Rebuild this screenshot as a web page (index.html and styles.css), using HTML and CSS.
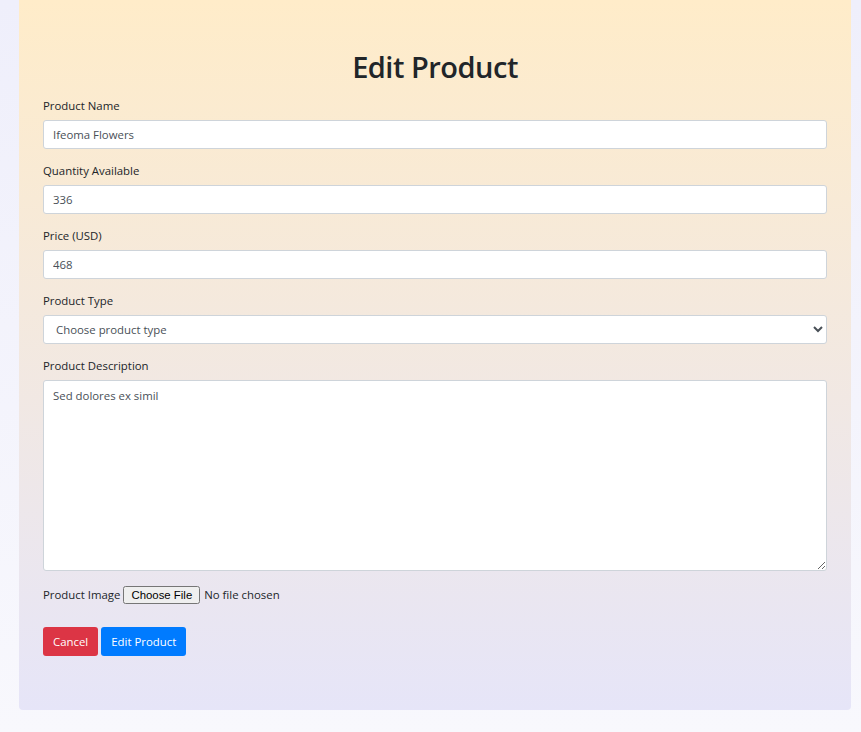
FILE: index.html
```html
<!DOCTYPE html>
<html lang="en">
<head>
<meta charset="utf-8">
<title>Edit Product</title>
<link rel="stylesheet" href="styles.css">
</head>
<body>
<main class="card">
  <h1 class="title">Edit Product</h1>
  <form class="form">
    <div class="group">
      <label class="label" for="name">Product Name</label>
      <input class="control" id="name" type="text" value="Ifeoma Flowers">
    </div>
    <div class="group">
      <label class="label" for="qty">Quantity Available</label>
      <input class="control" id="qty" type="text" value="336">
    </div>
    <div class="group">
      <label class="label" for="price">Price (USD)</label>
      <input class="control" id="price" type="text" value="468">
    </div>
    <div class="group">
      <label class="label" for="type">Product Type</label>
      <select class="control select" id="type">
        <option>Choose product type</option>
      </select>
    </div>
    <div class="group">
      <label class="label" for="desc">Product Description</label>
      <textarea class="control area" id="desc">Sed dolores ex simil</textarea>
    </div>
    <div class="file-row">
      <label class="file-label" for="img">Product Image</label>
      <input class="file" id="img" type="file">
    </div>
    <div class="actions">
      <button class="btn btn-danger" type="button">Cancel</button>
      <button class="btn btn-primary" type="button">Edit Product</button>
    </div>
  </form>
</main>
</body>
</html>
```
FILE: styles.css
```css
html, body {
  margin: 0;
  padding: 0;
}
body {
  min-height: 732px;
  background: linear-gradient(to bottom, #efeffb, #f8f8fd);
  font-family: "Open Sans", "Noto Sans", sans-serif;
  font-size: 11.4px;
  color: #212529;
  padding: 0 10px 0 19px;
  box-sizing: border-box;
}
.card {
  background: linear-gradient(to bottom, #ffecc9, #e6e5f8);
  border-radius: 0 0 4px 4px;
  padding: 49px 24px 55px;
  height: 710px;
  box-sizing: border-box;
}
.title {
  margin: 0 0 12px;
  text-align: center;
  font-size: 29px;
  font-weight: 600;
  letter-spacing: -0.5px;
  line-height: 36px;
  color: #212529;
}
.group {
  margin-bottom: 13px;
}
.label {
  display: block;
  line-height: 18px;
  margin-bottom: 5px;
}
.control {
  display: block;
  width: 100%;
  box-sizing: border-box;
  height: 29px;
  padding: 4px 9px;
  font-family: inherit;
  font-size: 11.4px;
  color: #495057;
  background: #fff;
  border: 1px solid #ced4da;
  border-radius: 3px;
  outline: none;
}
.select {
  padding-left: 8px;
}
.area {
  height: 191px;
  padding: 6px 9px;
  resize: vertical;
  line-height: 18px;
}
.file-row {
  display: flex;
  align-items: center;
  gap: 3px;
  height: 22px;
  margin-top: 1px;
}
.file-label {
  line-height: 18px;
}
.file {
  font-family: inherit;
  font-size: 11.4px;
  color: #212529;
}
.actions {
  display: flex;
  gap: 3px;
  margin-top: 21px;
}
.btn {
  height: 29px;
  padding: 0 10px;
  border: none;
  border-radius: 3px;
  color: #fff;
  font-family: inherit;
  font-size: 11.4px;
}
.btn-danger {
  background: #dc3545;
}
.btn-primary {
  background: #007bff;
}
```
